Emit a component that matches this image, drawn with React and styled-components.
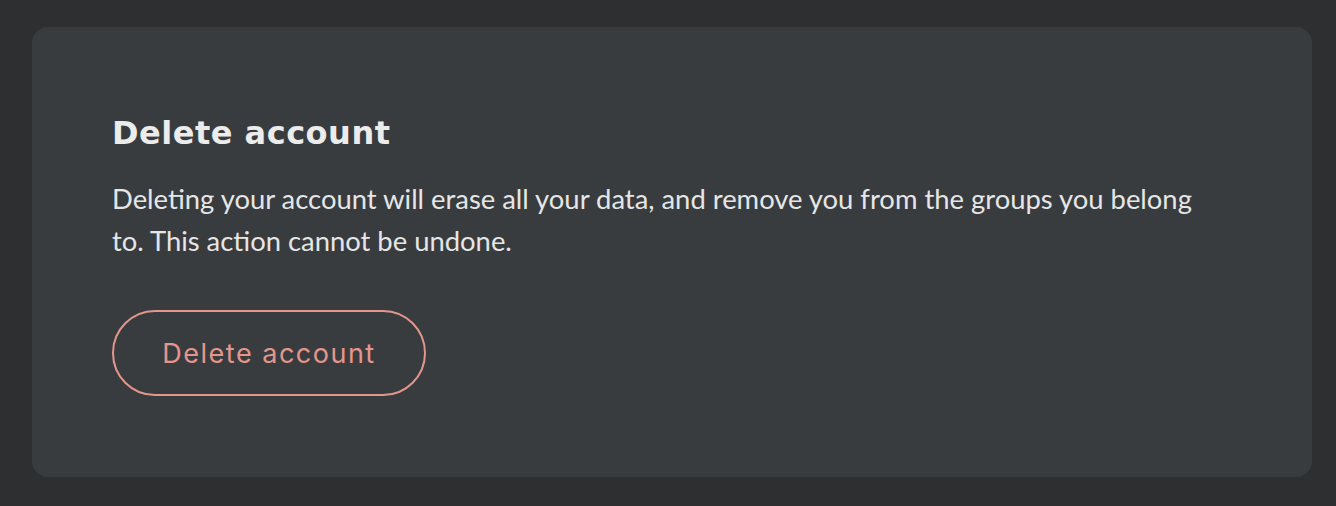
import React from "react";
import styled, { createGlobalStyle } from "styled-components";

const GlobalStyle = createGlobalStyle`
  html, body {
    margin: 0;
    padding: 0;
    background: #2e2f31;
  }
  body {
    font-family: Lato, "Open Sans", sans-serif;
  }
`;

const Page = styled.div`
  min-height: 506px;
  padding: 27px 24px 29px 32px;
  box-sizing: border-box;
`;

const Card = styled.section`
  background: #393c3f;
  border-radius: 16px;
  padding: 84px 80px 81px;
  width: 1280px;
  box-sizing: border-box;
`;

const Title = styled.h2`
  margin: 0;
  font-family: "DejaVu Sans", Inter, sans-serif;
  font-weight: 700;
  font-size: 32px;
  line-height: 44px;
  letter-spacing: 0.5px;
  color: #ececec;
`;

const Description = styled.p`
  margin: 23px 0 0;
  font-family: Lato, sans-serif;
  font-size: 27.4px;
  line-height: 42px;
  color: #e6e6e6;
  max-width: 1100px;
`;

const OutlineButton = styled.button`
  display: block;
  margin-top: 48px;
  width: 314px;
  height: 86px;
  border: 2px solid ${p => p.$color};
  border-radius: 43px;
  background: transparent;
  color: ${p => p.$color};
  font-family: Inter, "Open Sans", sans-serif;
  font-size: 27px;
  font-weight: 400;
  letter-spacing: 1.5px;
  cursor: pointer;
  padding: 0;
`;

const App = () => (
  <Page>
    <GlobalStyle />
    <Card>
      <Title>Delete account</Title>
      <Description>
        Deleting your account will erase all your data, and remove you from the
        groups you belong to. This action cannot be undone.
      </Description>
      <OutlineButton $color="#e3968c">Delete account</OutlineButton>
    </Card>
  </Page>
);

export default App;
